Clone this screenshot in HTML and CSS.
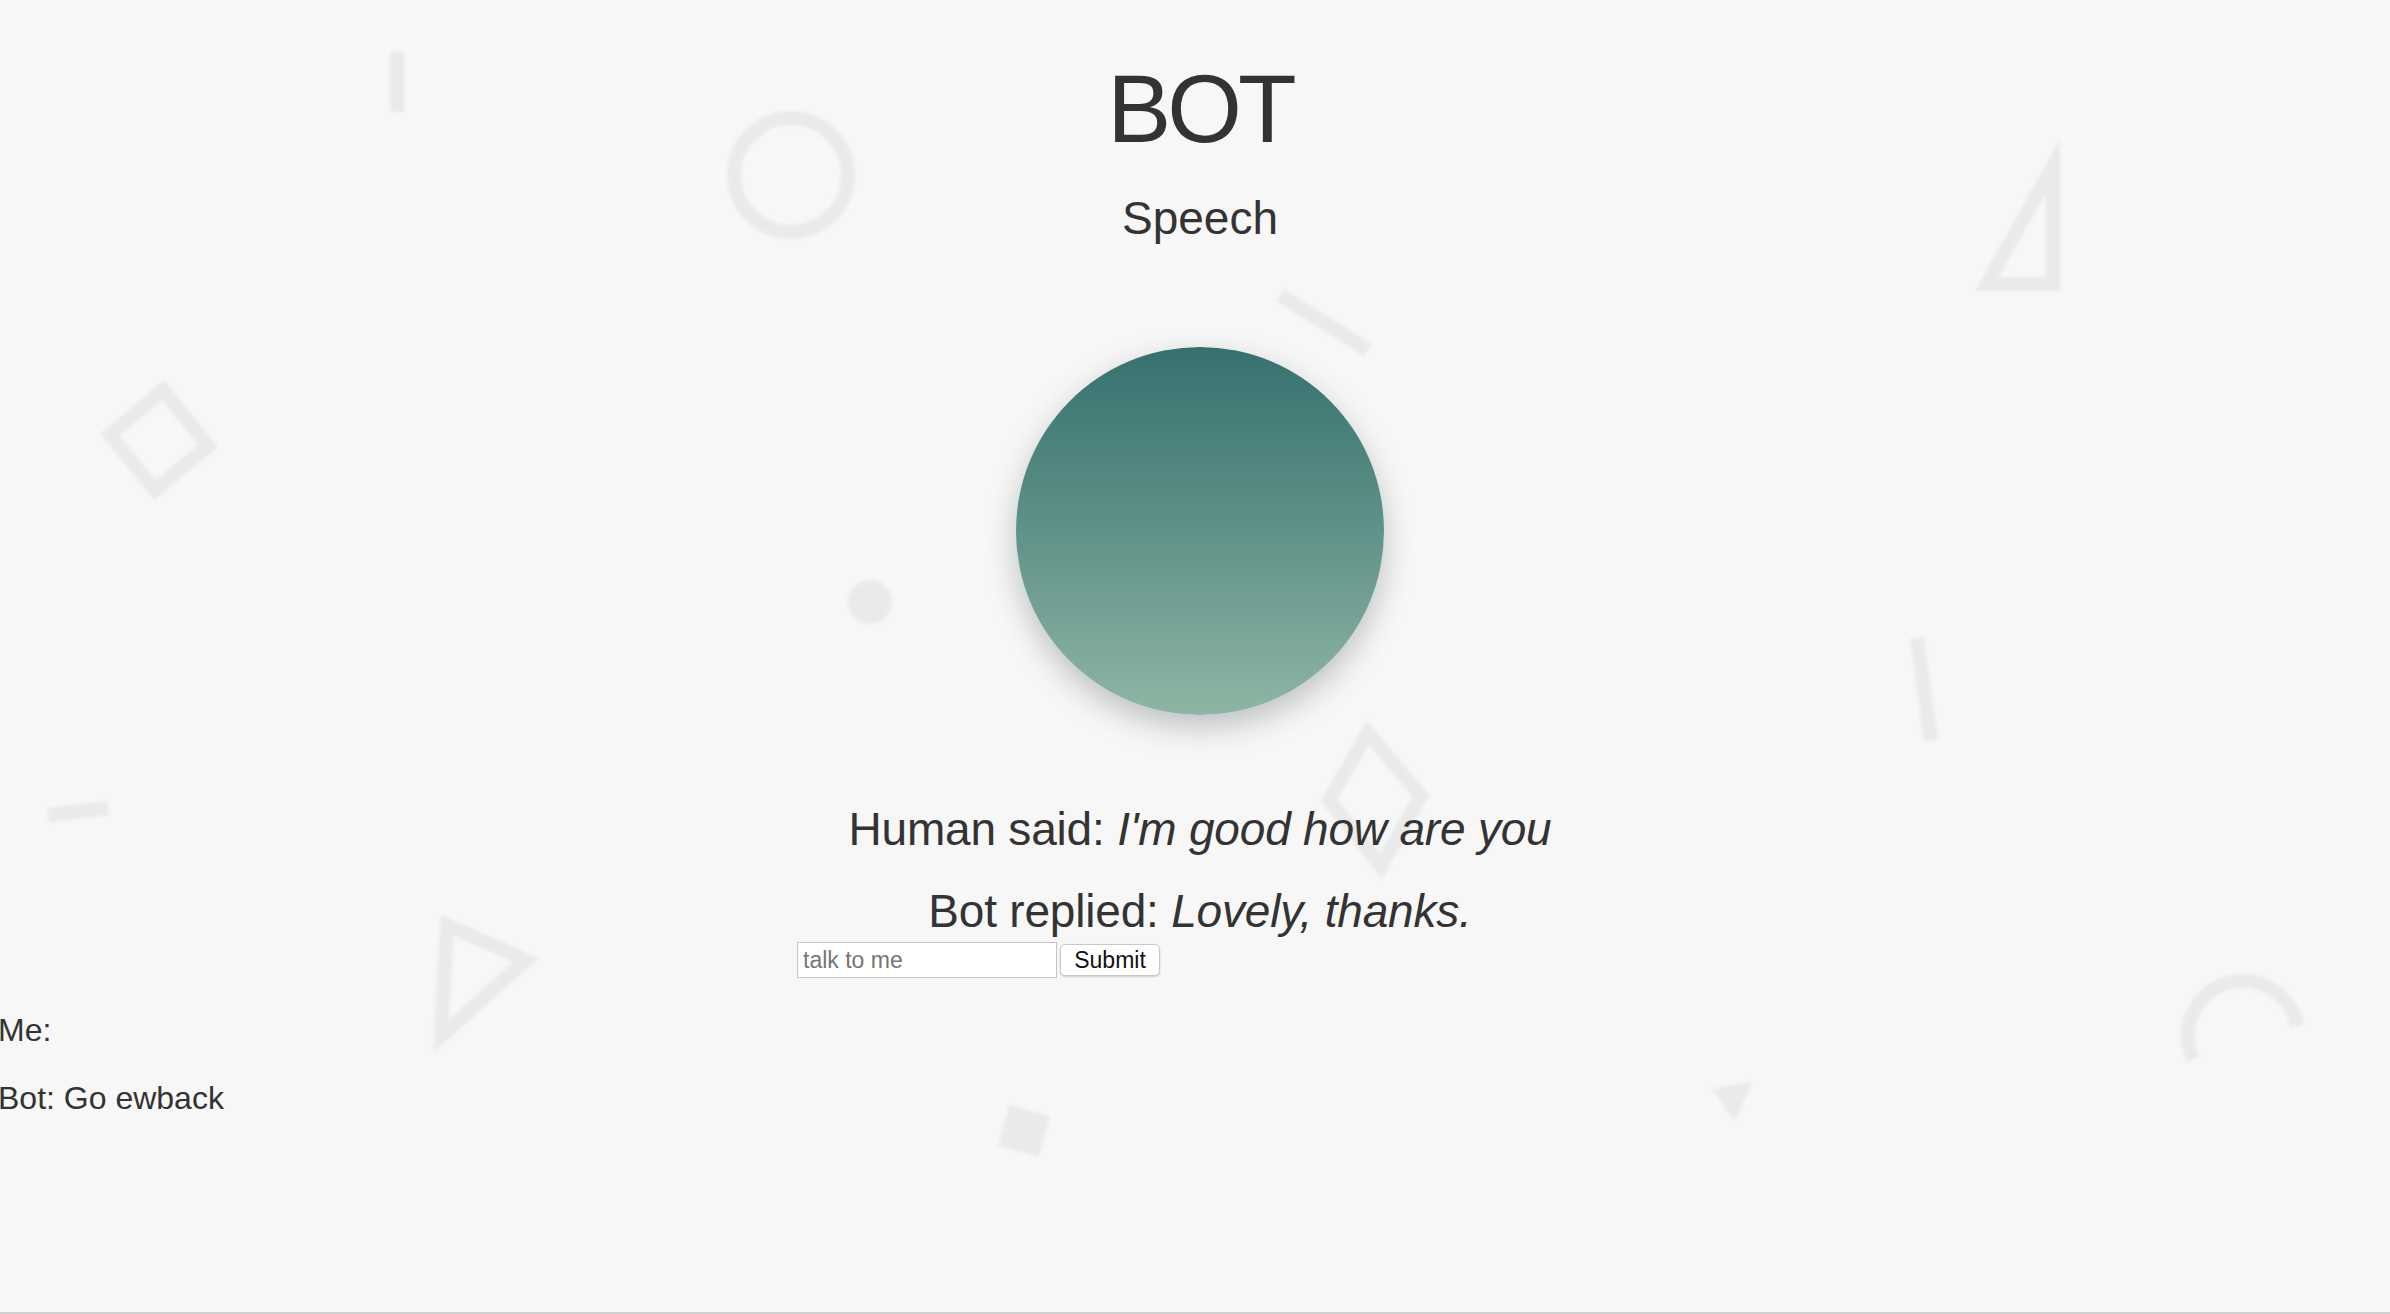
FILE: index.html
```html
<!DOCTYPE html>
<html lang="en">
<head>
<meta charset="utf-8">
<title>BOT</title>
<link rel="stylesheet" href="styles.css">
</head>
<body>
<div class="page">
  <svg class="bg-shapes" width="2390" height="1312" viewBox="0 0 2390 1312" aria-hidden="true">
    <g class="outline">
      <line x1="397" y1="52" x2="397" y2="112" />
      <circle cx="791" cy="175" r="57" />
      <polygon points="163,390 208,446 155,490 110,435" />
      <polygon points="2053,166 2053,284 1987,284" />
      <line x1="1917" y1="638" x2="1931" y2="740" />
      <path d="M 2193 1059 A 55 55 0 1 1 2297 1026" />
      <polygon points="1368,733 1421,796 1381,866 1329,800" />
      <line x1="1280" y1="295" x2="1368" y2="350" />
      <line x1="48" y1="815" x2="108" y2="808" />
      <polygon points="447,925 526,960 441,1036" />
    </g>
    <g class="filled">
      <circle cx="870" cy="602" r="22" />
      <polygon points="1712,1089 1752,1082 1735,1122" />
      <rect x="1003" y="1110" width="42" height="42" transform="rotate(15 1024 1131)" />
    </g>
  </svg>

  <main class="content">
    <section class="stage">
      <h1 class="title">BOT</h1>
      <h2 class="subtitle">Speech</h2>
      <div class="orb"></div>
      <p class="line human">Human said: <em>I'm good how are you</em></p>
      <p class="line bot">Bot replied: <em>Lovely, thanks.</em></p>
      <form class="talk">
        <input class="talk-input" type="text" placeholder="talk to me">
        <button class="talk-btn" type="button">Submit</button>
      </form>
    </section>
    <div class="log">
      <p class="log-line">Me:</p>
      <p class="log-line">Bot: Go ewback</p>
    </div>
  </main>
</div>
</body>
</html>
```

FILE: styles.css
```css
html, body {
  margin: 0;
  padding: 0;
  background: #f7f7f7;
}

body {
  font-family: "Liberation Sans", Arial, "Helvetica Neue", sans-serif;
  color: #333333;
}

.page {
  position: relative;
  min-height: 1312px;
  border-bottom: 2px solid #cfcfcf;
  overflow: hidden;
}

.bg-shapes {
  position: absolute;
  top: 0;
  left: 0;
  z-index: 0;
  filter: blur(1.5px);
}

.bg-shapes .outline {
  fill: none;
  stroke: #eaeaea;
  stroke-width: 14;
  stroke-linejoin: miter;
}

.bg-shapes .filled {
  fill: #eaeaea;
}

.content {
  position: relative;
  z-index: 1;
  padding-left: 10px;
}

.stage {
  width: 806px;
  margin: 0 auto;
  padding-top: 61px;
  display: flex;
  flex-direction: column;
  align-items: center;
  text-align: center;
}

.title {
  margin: 0;
  font-size: 96px;
  line-height: 96px;
  font-weight: 400;
  letter-spacing: -4px;
  color: #333;
}

.subtitle {
  margin: 38px 0 0;
  font-size: 46px;
  line-height: 46px;
  font-weight: 400;
  letter-spacing: 0;
  color: #333;
}

.orb {
  margin-top: 106px;
  width: 368px;
  height: 368px;
  border-radius: 50%;
  background: linear-gradient(to bottom, #37706f 0%, #5f9289 50%, #8fb5a4 100%);
  box-shadow: 0 12px 30px rgba(40, 50, 55, 0.28);
}

.line {
  margin: 0;
  font-size: 46px;
  line-height: 46px;
  letter-spacing: -0.2px;
  color: #333;
}

.line em {
  font-style: italic;
}

.human {
  margin-top: 91px;
}

.bot {
  margin-top: 36px;
}

.talk {
  align-self: flex-start;
  margin-top: 8px;
  display: flex;
  align-items: center;
  gap: 3px;
}

.talk-input {
  box-sizing: border-box;
  width: 260px;
  height: 36px;
  margin: 0;
  padding: 0 5px;
  border: 1px solid #c4c4c4;
  border-radius: 0;
  background: #ffffff;
  font-family: "Liberation Sans", Arial, sans-serif;
  font-size: 23px;
  color: #333;
}

.talk-input::placeholder {
  color: #757575;
}

.talk-btn {
  box-sizing: border-box;
  width: 100px;
  height: 32px;
  margin: 0;
  padding: 0;
  border: 1px solid #c9c9c9;
  border-radius: 5px;
  background: #ffffff;
  box-shadow: 0 1px 2px rgba(0, 0, 0, 0.18);
  font-family: "Liberation Sans", Arial, sans-serif;
  font-size: 23px;
  color: #111;
}

.log {
  margin-left: -12px;
  padding-top: 37px;
}

.log-line {
  margin: 0 0 37px;
  font-size: 32px;
  line-height: 31px;
  letter-spacing: 0;
  color: #333;
}
```
